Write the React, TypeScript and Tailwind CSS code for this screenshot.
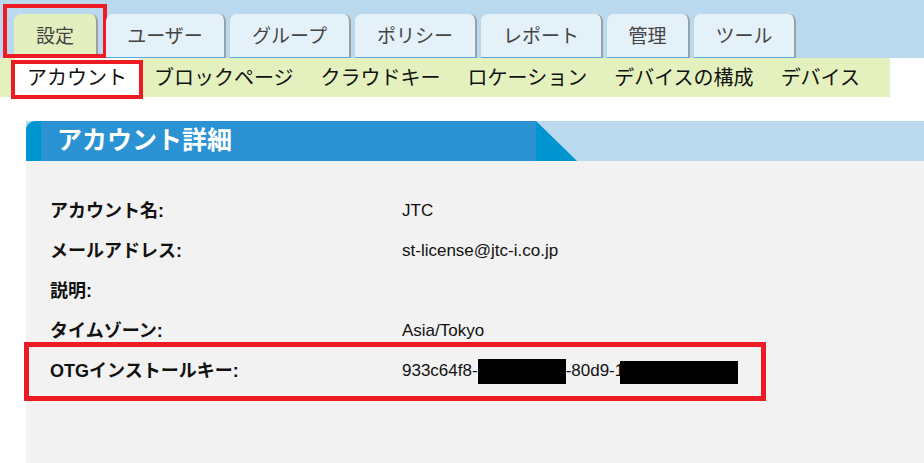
import React from 'react';

const TABS = [
  { label: '設定', w: 'w-[84px]', active: true },
  { label: 'ユーザー', w: 'w-[120px]' },
  { label: 'グループ', w: 'w-[121px]' },
  { label: 'ポリシー', w: 'w-[122px]' },
  { label: 'レポート', w: 'w-[122px]' },
  { label: '管理', w: 'w-[83px]' },
  { label: 'ツール', w: 'w-[102px]' },
];

const SUBNAV = ['アカウント', 'ブロックページ', 'クラウドキー', 'ロケーション', 'デバイスの構成', 'デバイス'];

const ROWS = [
  { label: 'アカウント名:', value: 'JTC' },
  { label: 'メールアドレス:', value: 'st-license@jtc-i.co.jp' },
  { label: '説明:', value: '' },
  { label: 'タイムゾーン:', value: 'Asia/Tokyo' },
];

const font = { fontFamily: '"Liberation Sans", "Noto Sans CJK JP", sans-serif' };

export default function App() {
  return (
    <div className="w-[924px] h-[463px] bg-white overflow-hidden" style={font}>
      {/* top tabs */}
      <div className="h-[58px] bg-[#bbd9ee] flex items-end pl-[14px] gap-[4px]">
        {TABS.map((t, i) => (
          <div key={t.label} className={`relative shrink-0 ${i === 0 ? 'mr-[4px]' : ''}`}>
            <div
              className={`${t.w} h-[44px] pt-[3px] rounded-t-[7px] border-r-2 border-[#9aa0a6] flex items-center justify-center whitespace-nowrap text-[19px] text-[#444] ${
                t.active ? 'bg-[#e3efbf]' : 'bg-[#e5f1f9] border-b border-b-[#55a8e2]'
              }`}
            >
              {t.label}
            </div>
            {t.active && (
              <div className="absolute left-[-11px] top-[-10px] w-[104px] h-[54px] border-4 border-[#ed1c24] pointer-events-none" />
            )}
          </div>
        ))}
      </div>

      {/* sub navigation */}
      <div className="w-[890px] h-[39px] bg-[#e4f1be] flex items-center pl-[15px]">
        {SUBNAV.map((s, i) => (
          <div
            key={s}
            className={`relative shrink-0 whitespace-nowrap h-[39px] flex items-center px-[12px] mr-[3px] text-[20px] text-[#111] ${i === 0 ? 'bg-white' : ''}`}
          >
            {s}
            {i === 0 && (
              <div className="absolute left-[-4px] top-[2px] right-[-4px] bottom-[-2px] border-4 border-[#ed1c24] pointer-events-none" />
            )}
          </div>
        ))}
      </div>

      {/* account details */}
      <div className="pl-[26px] pt-[24px]">
        <div className="h-[40px] flex bg-[#bad9ee]">
          <div className="w-[15px] bg-[#0094d1] rounded-tl-[9px]" />
          <div className="w-[495px] bg-[#2b93d3] flex items-center pl-[16px] text-white font-bold text-[25px]">
            アカウント詳細
          </div>
          <svg width="41" height="40" viewBox="0 0 41 40" className="block">
            <polygon points="0,0 41,40 0,40" fill="#0094d1" />
          </svg>
        </div>

        <div className="h-[302px] bg-[#f2f2f2] pt-[30px]">
          {ROWS.map((r) => (
            <div key={r.label} className="h-[40px] flex items-center pl-[24px]">
              <div className="w-[352px] font-bold text-[18px] text-[#111]">{r.label}</div>
              <div className="text-[17px] text-[#111]">{r.value}</div>
            </div>
          ))}
          <div className="relative h-[40px] flex items-center pl-[24px]">
            <div className="w-[352px] font-bold text-[18px] text-[#111]">OTGインストールキー:</div>
            <div className="flex items-center text-[17px] text-[#111]">
              <span>933c64f8-</span>
              <span className="inline-block w-[88px] h-[25px] bg-black" />
              <span>-80d9-1</span>
              <span className="inline-block w-[118px] h-[23px] bg-black -ml-[4px] mt-[2px]" />
            </div>
            <div className="absolute left-[-2px] top-[-9px] w-[742px] h-[59px] border-[5px] border-[#ed1c24] pointer-events-none" />
          </div>
        </div>
      </div>
    </div>
  );
}
